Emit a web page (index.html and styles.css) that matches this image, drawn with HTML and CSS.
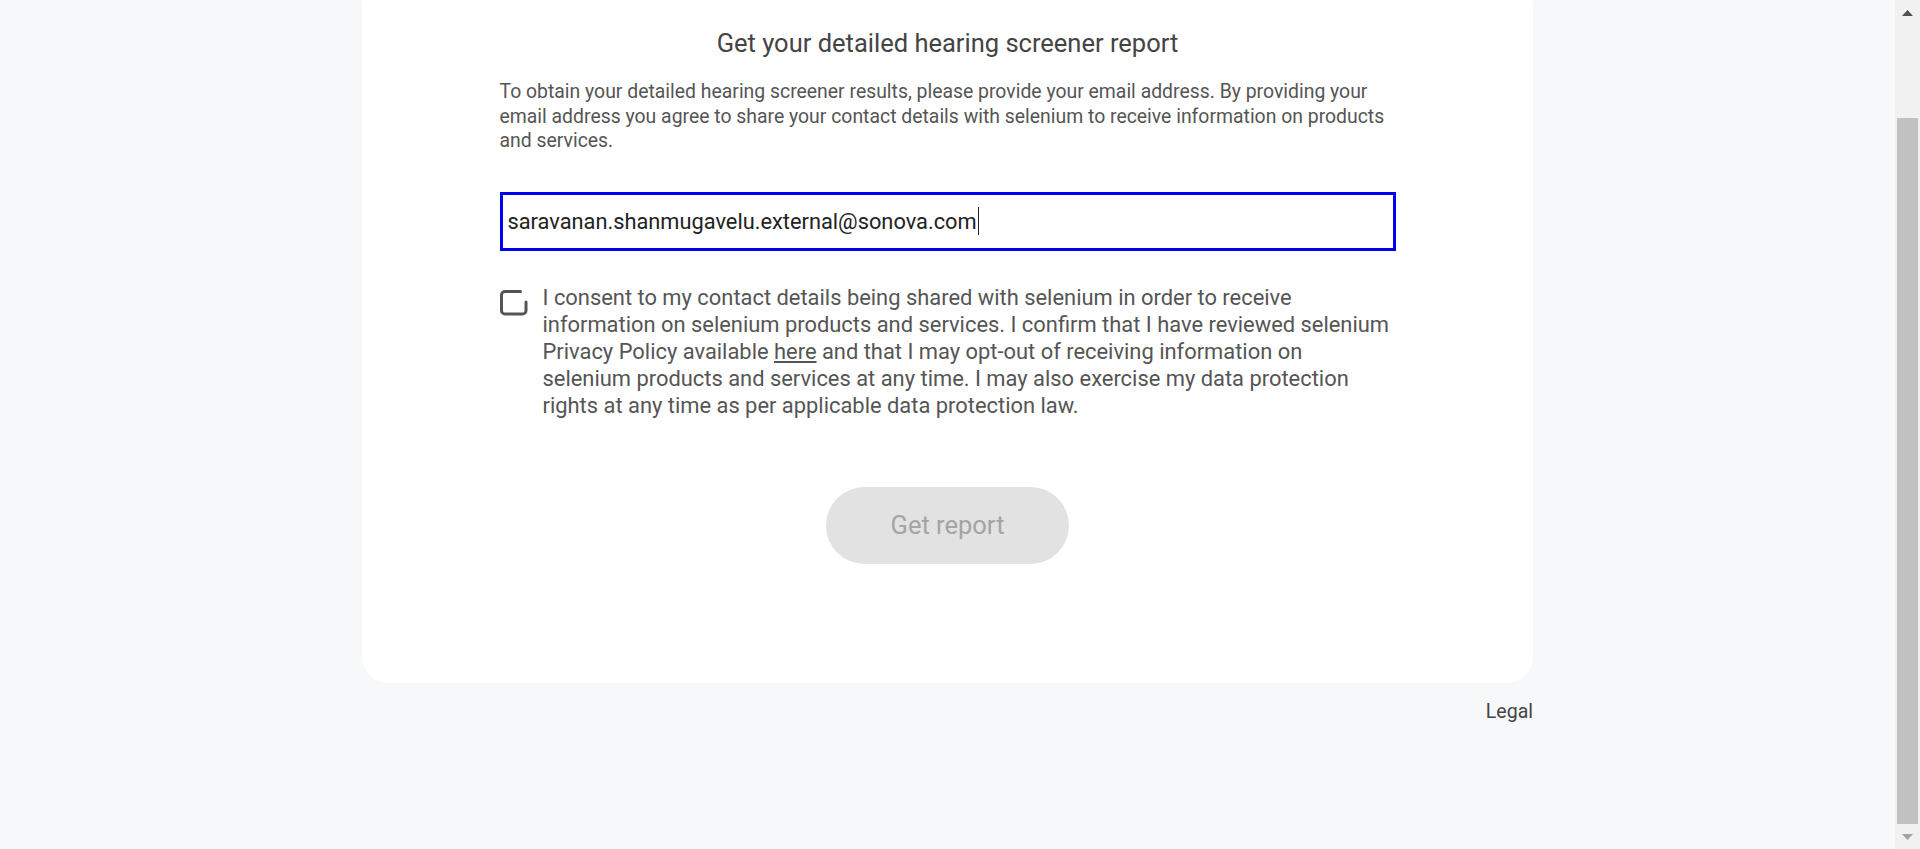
FILE: index.html
```html
<!DOCTYPE html>
<html lang="en">
<head>
<meta charset="utf-8">
<title>Get your detailed hearing screener report</title>
<link rel="stylesheet" href="styles.css">
</head>
<body>
<div class="page">
  <div class="main">
    <div class="card">
      <div class="content">
        <h2 class="title">Get your detailed hearing screener report</h2>
        <p class="intro">To obtain your detailed hearing screener results, please provide your email address. By providing your email address you agree to share your contact details with selenium to receive information on products and services.</p>
        <div class="field"><span class="value">saravanan.shanmugavelu.external@sonova.com</span><span class="caret"></span></div>
        <div class="consent">
          <svg class="checkbox" width="28" height="26" viewBox="0 0 28 26" aria-hidden="true">
            <path d="M20.5 1.5 H5 a3.5 3.5 0 0 0 -3.5 3.5 V20.5 a3.5 3.5 0 0 0 3.5 3.5 H22.5 a3.5 3.5 0 0 0 3.5 -3.5 V12" fill="none" stroke="#555" stroke-width="3" stroke-linecap="round"/>
          </svg>
          <p class="consent-text">I consent to my contact details being shared with selenium in order to receive information on selenium products and services. I confirm that I have reviewed selenium Privacy Policy available <a class="link" href="#">here</a> and that I may opt-out of receiving information on selenium products and services at any time. I may also exercise my data protection rights at any time as per applicable data protection law.</p>
        </div>
        <div class="actions">
          <button class="btn" type="button" disabled>Get report</button>
        </div>
      </div>
    </div>
    <div class="footer"><a class="legal" href="#">Legal</a></div>
  </div>
  <div class="scrollbar">
    <div class="sb-btn">
      <svg width="11" height="6" viewBox="0 0 11 6"><polygon points="0,6 5.5,0 11,6" fill="#505050"/></svg>
    </div>
    <div class="sb-gap"></div>
    <div class="sb-thumb"></div>
    <div class="sb-btn">
      <svg width="11" height="6" viewBox="0 0 11 6"><polygon points="0,0 11,0 5.5,6" fill="#a3a3a3"/></svg>
    </div>
  </div>
</div>
</body>
</html>
```

FILE: styles.css
```css
* { box-sizing: border-box; }
html, body { margin: 0; padding: 0; }
body {
  font-family: Roboto, "Noto Sans", Arial, sans-serif;
  background: #f7f8fa;
  color: #555;
}
.page {
  display: flex;
  height: 849px;
  overflow: hidden;
}
.main {
  flex: 1;
  display: flex;
  flex-direction: column;
  align-items: center;
}
.card {
  width: 1171px;
  margin-top: -20px;
  background: #fff;
  border-radius: 26px;
  padding: 47px 0 119px;
}
.content {
  width: 896px;
  margin: 0 auto;
}
.title {
  margin: 0 0 21px;
  font-size: 25.5px;
  line-height: 32px;
  font-weight: 400;
  color: #444;
  text-align: center;
}
.intro {
  margin: 0 0 38px;
  font-size: 19.4px;
  line-height: 24.5px;
  color: #555;
}
.field {
  height: 59px;
  border: 3px solid #0000ee;
  background: #fff;
  display: flex;
  align-items: center;
  padding-left: 5px;
}
.value {
  font-size: 21.8px;
  color: #222;
}
.caret {
  width: 1px;
  height: 28px;
  background: #222;
  margin-left: 1px;
}
.consent {
  display: flex;
  gap: 15px;
  margin-top: 33px;
}
.checkbox {
  flex: none;
  margin-top: 6px;
}
.consent-text {
  margin: 0;
  font-size: 21.9px;
  line-height: 27px;
  color: #555;
}
.link {
  display: inline-block;
  line-height: 24px;
  color: #555;
  text-decoration: underline;
}
.actions {
  display: flex;
  justify-content: center;
  margin-top: 68px;
}
.btn {
  width: 243px;
  height: 77px;
  border: none;
  border-radius: 39px;
  background: #e2e2e2;
  color: #a4a4a4;
  font-family: Roboto, "Noto Sans", Arial, sans-serif;
  font-size: 25.5px;
}
.footer {
  width: 1171px;
  text-align: right;
  margin-top: 17px;
  font-size: 19.5px;
  line-height: 24px;
}
.legal { color: #444; text-decoration: none; }
.scrollbar {
  width: 25px;
  flex: none;
  background: #f1f1f1;
  display: flex;
  flex-direction: column;
}
.sb-btn {
  height: 25px;
  display: flex;
  align-items: center;
  justify-content: center;
}
.sb-gap { height: 93px; }
.sb-thumb {
  height: 706px;
  margin: 0 2px;
  background: #c1c1c1;
}
```
